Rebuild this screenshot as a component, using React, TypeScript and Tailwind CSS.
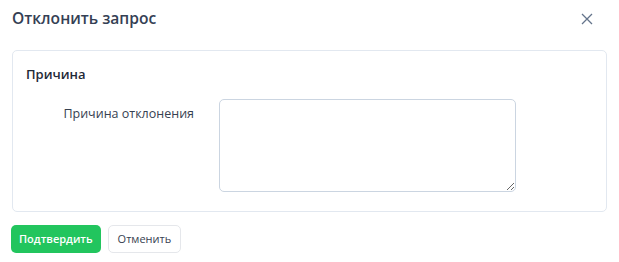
const App = () => {
  return (
    <div className="w-[619px] h-[262px] bg-white font-['Open_Sans',sans-serif] text-[#374151]">
      <div className="flex items-center justify-between h-[37px] pl-3 pr-[26px]">
        <h2 className="text-[15.6px] font-semibold text-[#344054]">Отклонить запрос</h2>
        <button className="text-[#64748b]" aria-label="Закрыть">
          <svg width="12" height="12" viewBox="0 0 12 12" fill="none" stroke="currentColor" strokeWidth="1.3">
            <path d="M1 1l10 10M11 1L1 11" />
          </svg>
        </button>
      </div>
      <div className="mx-3 mt-[13px] h-[162px] rounded-[5px] border border-[#e2e8f0] px-[13px] py-[14px]">
        <h3 className="text-[13px] font-semibold text-[#1f2937] leading-[18px]">Причина</h3>
        <div className="flex mt-[16px]">
          <label className="w-[181px] pr-[13px] text-right text-[12.5px] leading-[18px] text-[#374151] mt-[6px]">
            Причина отклонения
          </label>
          <textarea className="ml-[12px] w-[297px] h-[93px] rounded-[5px] border border-[#cbd5e1] outline-none resize" />
        </div>
      </div>
      <div className="flex gap-[7px] px-[11px] mt-[13px]">
        <button className="h-[28px] px-[8px] rounded-[5px] bg-[#22c55e] text-white text-[11px] font-semibold">
          Подтвердить
        </button>
        <button className="h-[28px] px-[9px] rounded-[5px] border border-[#e5e7eb] bg-white text-[11px] text-[#374151]">
          Отменить
        </button>
      </div>
    </div>
  );
};

export default App;
